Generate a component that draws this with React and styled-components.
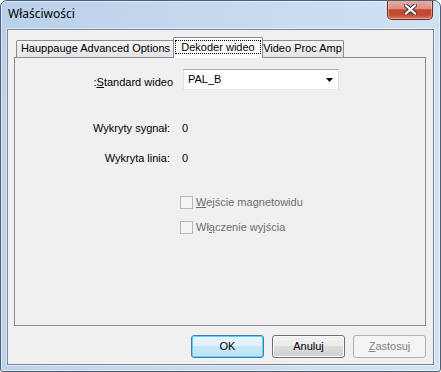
import React from "react"
import styled, {createGlobalStyle} from "styled-components"

const GlobalStyle = createGlobalStyle`
  html, body {
    margin: 0;
    padding: 0;
    background: #ffffff;
  }
  body {
    font-family: "Liberation Sans", Arial, sans-serif;
    font-size: 11px;
    color: #000;
  }
`

const Window = styled.div`
  box-sizing: border-box;
  width: 441px;
  height: 372px;
  display: flex;
  flex-direction: column;
  border: 1px solid #4d5f74;
  border-radius: 7px 7px 3px 3px;
  background: linear-gradient(100deg, #b9d0ea 0%, #c6daef 45%, #d3e3f4 100%);
  box-shadow: inset 0 0 0 1px rgba(255, 255, 255, 0.55);
  overflow: hidden;
`

const TitleBar = styled.div`
  flex: none;
  height: 28px;
  display: flex;
  align-items: flex-start;
  justify-content: space-between;
  padding-left: 7px;
`

const Title = styled.div`
  font-family: "Noto Sans", "Open Sans", sans-serif;
  font-size: 12px;
  line-height: 16px;
  padding-top: 5px;
`

const CloseButton = styled.div`
  box-sizing: border-box;
  width: 46px;
  height: 20px;
  margin: -1px 7px 0 0;
  display: flex;
  align-items: center;
  justify-content: center;
  border: 1px solid #6a2b24;
  border-top: none;
  border-radius: 0 0 5px 5px;
  background: linear-gradient(#eab1a4 0%, #dc8f7f 45%, #c74530 52%, #c24a33 78%, #d87b62 100%);
  box-shadow: inset 0 0 0 1px rgba(255, 220, 210, 0.45);
`

const Client = styled.div`
  flex: 1;
  margin: 0 6px 6px;
  display: flex;
  flex-direction: column;
  padding: 7px 7px 6px 6px;
  border: 1px solid #7a8694;
  background: #f0f0f0;
  box-shadow: 0 0 0 1px rgba(255, 255, 255, 0.5);
`

const TabStrip = styled.div`
  flex: none;
  height: 20px;
  display: flex;
  align-items: flex-end;
  padding-left: 2px;
  position: relative;
  z-index: 2;
`

const Tab = styled.div`
  box-sizing: border-box;
  width: ${p => p.$width}px;
  height: ${p => (p.$active ? 21 : 17)}px;
  margin: ${p => (p.$active ? "0 -2px -1px" : "0")};
  padding-top: ${p => (p.$active ? 2 : 1)}px;
  position: relative;
  z-index: ${p => (p.$active ? 2 : 1)};
  display: flex;
  justify-content: center;
  align-items: flex-start;
  border: 1px solid #898c95;
  border-bottom: none;
  border-radius: 2px 2px 0 0;
  background: ${p => (p.$active ? "#fdfdfd" : "linear-gradient(#f4f4f4, #e4e4e4)")};
  line-height: 13px;
  white-space: nowrap;
`

const FocusText = styled.span`
  border: 1px dotted #000;
  padding: 0 5px;
  line-height: 12px;
`

const Panel = styled.div`
  flex: none;
  height: 269px;
  box-sizing: border-box;
  border: 1px solid #898c95;
  background: #f0f0f0;
  display: flex;
  flex-direction: column;
  padding-top: 11px;
`

const FieldRow = styled.div`
  display: flex;
  align-items: flex-start;
  margin-top: ${p => p.$top}px;
`

const FieldLabel = styled.div`
  width: ${p => p.$width}px;
  padding-top: ${p => p.$offset || 0}px;
  text-align: right;
  line-height: 13px;
  white-space: nowrap;
`

const FieldValue = styled.div`
  margin-left: ${p => p.$gap}px;
  line-height: 13px;
`

const Combo = styled.div`
  box-sizing: border-box;
  width: 156px;
  height: 21px;
  margin-left: 10px;
  display: flex;
  align-items: flex-start;
  padding: 3px 0 0 4px;
  background: #fff;
  border: 1px solid;
  border-color: #abadb3 #dbdfe6 #e3e9ef #e2e3ea;
  line-height: 13px;
`

const ComboArrow = styled.svg`
  margin: 5px 5px 0 auto;
`

const CheckRow = styled.label`
  display: flex;
  align-items: flex-start;
  padding-left: 165px;
  margin-top: ${p => p.$top}px;
  color: #6d6d6d;
  line-height: 13px;
`

const CheckBox = styled.span`
  box-sizing: border-box;
  width: 13px;
  height: 13px;
  flex: none;
  border: 1px solid #b9b9b9;
  background: #f4f4f4;
`

const CheckText = styled.span`
  margin-left: 3px;
`

const ButtonRow = styled.div`
  flex: none;
  display: flex;
  justify-content: flex-end;
  gap: 8px;
  margin-top: 9px;
`

const buttonLooks = {
  default: `
    border-color: #3c7fb1;
    color: #000;
    background: linear-gradient(#e8f5fc 0%, #dff1fb 50%, #c7e7f8 50%, #bfe2f6 100%);
    box-shadow: inset 0 0 0 1px #5ad3ff;
  `,
  normal: `
    border-color: #707070;
    color: #000;
    background: linear-gradient(#f2f2f2 0%, #ebebeb 50%, #dddddd 50%, #cfcfcf 100%);
    box-shadow: inset 0 0 0 1px #fbfbfb;
  `,
  disabled: `
    border-color: #adb2b5;
    color: #838383;
    background: #f4f4f4;
  `
}

const Button = styled.div`
  box-sizing: border-box;
  width: 73px;
  height: 23px;
  display: flex;
  align-items: center;
  justify-content: center;
  border: 1px solid;
  border-radius: 3px;
  line-height: 13px;
  ${p => buttonLooks[p.$look]}
`

const CloseGlyph = () => (
  <svg width="13" height="11" viewBox="0 0 13 11">
    <path d="M2 1.5 L11 9.5 M11 1.5 L2 9.5" stroke="#3b3b3b" strokeWidth="4.2" strokeLinecap="square" />
    <path d="M2 1.5 L11 9.5 M11 1.5 L2 9.5" stroke="#ffffff" strokeWidth="2.2" strokeLinecap="square" />
  </svg>
)

export default function App() {
  return (
    <>
      <GlobalStyle />
      <Window>
        <TitleBar>
          <Title>Właściwości</Title>
          <CloseButton>
            <CloseGlyph />
          </CloseButton>
        </TitleBar>
        <Client>
          <TabStrip>
            <Tab $width={159}>Hauppauge Advanced Options</Tab>
            <Tab $width={90} $active>
              <FocusText>Dekoder wideo</FocusText>
            </Tab>
            <Tab $width={83}>Video Proc Amp</Tab>
          </TabStrip>
          <Panel>
            <FieldRow $top={0}>
              <FieldLabel $width={158} $offset={7}>:<u>S</u>tandard wideo</FieldLabel>
              <Combo>
                PAL_B
                <ComboArrow width="7" height="4" viewBox="0 0 7 4">
                  <polygon points="0,0 7,0 3.5,4" fill="#000" />
                </ComboArrow>
              </Combo>
            </FieldRow>
            <FieldRow $top={32}>
              <FieldLabel $width={155}>Wykryty sygnał:</FieldLabel>
              <FieldValue $gap={12}>0</FieldValue>
            </FieldRow>
            <FieldRow $top={17}>
              <FieldLabel $width={155}>Wykryta linia:</FieldLabel>
              <FieldValue $gap={12}>0</FieldValue>
            </FieldRow>
            <CheckRow $top={31}>
              <CheckBox />
              <CheckText><u>W</u>ejście magnetowidu</CheckText>
            </CheckRow>
            <CheckRow $top={12}>
              <CheckBox />
              <CheckText>Wł<u>ą</u>czenie wyjścia</CheckText>
            </CheckRow>
          </Panel>
          <ButtonRow>
            <Button $look="default">OK</Button>
            <Button $look="normal">Anuluj</Button>
            <Button $look="disabled"><span><u>Z</u>astosuj</span></Button>
          </ButtonRow>
        </Client>
      </Window>
    </>
  )
}
